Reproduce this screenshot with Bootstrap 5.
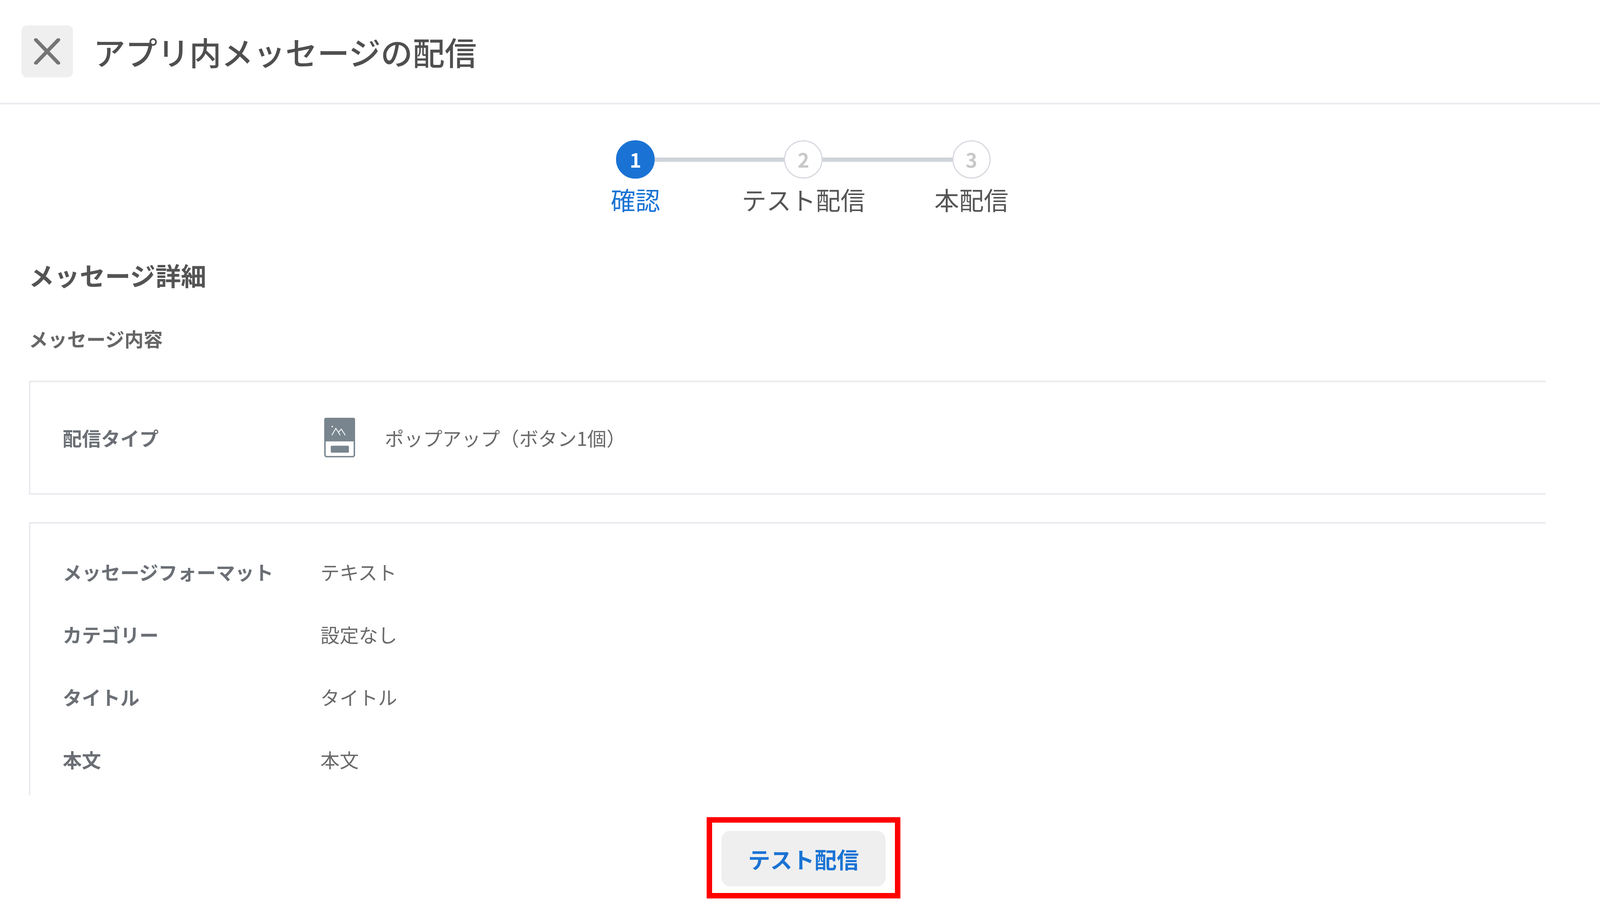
<!DOCTYPE html>
<html lang="ja">
<head>
<meta charset="utf-8">
<title>アプリ内メッセージの配信</title>
<link href="https://cdn.jsdelivr.net/npm/bootstrap@5.3.0/dist/css/bootstrap.min.css" rel="stylesheet">
<style>
html, body { background: #fff; }
body { font-family: "Noto Sans CJK JP", "Noto Sans", sans-serif; color: #5f6368; overflow: hidden; }
.top-bar { height: 267px; padding-left: 1.34vw; border-bottom: 4px solid #e9ebef; }
.close-btn { width: 3.227vw; height: 3.227vw; padding: 0; border: 0; border-radius: 14px; background: #efefef; flex: none; }
.close-btn:hover { background: #efefef; }
.close-btn svg { width: 1.64vw; height: 1.64vw; display: block; margin: auto; }
.page-title { font-size: 2vw; line-height: 1; font-weight: 500; color: #4f4f4f; margin: 0 0 0 1.27vw; }
.centered-block { padding-left: 0.43vw; }
.stepper { margin-top: 87px; height: 108px; }
.step-dot { width: 2.41vw; height: 2.41vw; flex: none; font-size: 1.23vw; font-weight: 700; line-height: 1; background: #fff; border: 3px solid #d6d9df; color: #c8c8c8; }
.step-dot.is-current { background: #1a73d4; border-color: #1a73d4; color: #fff; }
.step-line { width: 8.09vw; height: 11px; background: #cfd3da; flex: none; }
.step-labels { margin-top: 12px; }
.step-label { width: 10.5vw; text-align: center; font-size: 1.545vw; line-height: 72px; color: #555; white-space: nowrap; }
.step-label.is-current { color: #1a73d4; }
.details { padding-left: 1.8vw; padding-right: 3.39vw; }
.section-title { font-size: 1.59vw; line-height: 90px; font-weight: 700; color: #545454; margin: 112px 0 0; }
.sub-title { font-size: 1.2vw; line-height: 70px; font-weight: 700; color: #666; margin: 83px 0 0; }
.info-panel { border: 4px solid #e9ebef; border-right: 0; }
.panel-type { margin-top: 73px; height: 292px; padding-left: 2.02vw; }
.panel-rows { margin-top: 70px; height: 699px; padding: 43px 0 0 2.02vw; border-bottom: 0; overflow: hidden; }
.info-row { height: 160px; }
.info-key { width: 16.11vw; flex: none; font-size: 1.2vw; font-weight: 700; color: #6b6f75; line-height: 1; white-space: nowrap; }
.info-val { font-size: 1.2vw; color: #6a6a6a; line-height: 1; white-space: nowrap; }
.type-icon { width: 1.93vw; height: auto; flex: none; margin-left: 0.23vw; margin-right: 1.86vw; }
.foot-area { margin-top: 56px; }
.mark-frame { border: 14px solid #f00; padding: 21px 0.59vw 17px; }
.send-btn { width: 10.25vw; height: 142px; padding: 0; border: 0; border-radius: 22px; background: #efefef; color: #1a73d4; font-size: 1.386vw; font-weight: 700; line-height: 1; }
.send-btn:hover { background: #efefef; color: #1a73d4; }
</style>
</head>
<body>
<header class="top-bar d-flex align-items-center">
  <button class="btn close-btn d-flex align-items-center justify-content-center" type="button" aria-label="閉じる">
    <svg viewBox="0 0 72 72"><path d="M5 4 67 68M67 4 5 68" stroke="#757575" stroke-width="10" stroke-linecap="round" fill="none"/></svg>
  </button>
  <h1 class="page-title">アプリ内メッセージの配信</h1>
</header>

<main>
  <div class="centered-block">
    <div class="stepper d-flex align-items-center justify-content-center">
      <div class="step-dot is-current rounded-circle d-flex align-items-center justify-content-center">1</div>
      <div class="step-line"></div>
      <div class="step-dot rounded-circle d-flex align-items-center justify-content-center">2</div>
      <div class="step-line"></div>
      <div class="step-dot rounded-circle d-flex align-items-center justify-content-center">3</div>
    </div>
    <div class="step-labels d-flex justify-content-center">
      <div class="step-label is-current">確認</div>
      <div class="step-label">テスト配信</div>
      <div class="step-label">本配信</div>
    </div>
  </div>

  <section class="details">
    <h2 class="section-title">メッセージ詳細</h2>
    <h3 class="sub-title">メッセージ内容</h3>
    <div class="info-panel panel-type d-flex align-items-center">
      <div class="info-key">配信タイプ</div>
      <svg class="type-icon" viewBox="0 0 85 109">
        <rect x="2" y="2" width="81" height="105" rx="5" fill="#fff" stroke="#78858e" stroke-width="4"/>
        <path d="M5 0H80a5 5 0 0 1 5 5V65H0V5a5 5 0 0 1 5-5Z" fill="#78858e"/>
        <path d="M21 48 32 29 44 48M39 40 47 31 58 48" fill="none" stroke="#fff" stroke-width="2.2"/>
        <circle cx="22" cy="24" r="2" fill="#fff"/>
        <rect x="18" y="77" width="50" height="19" rx="3" fill="#78858e"/>
      </svg>
      <div class="info-val">ポップアップ（ボタン1個）</div>
    </div>
    <div class="info-panel panel-rows">
      <div class="info-row d-flex align-items-center"><div class="info-key">メッセージフォーマット</div><div class="info-val">テキスト</div></div>
      <div class="info-row d-flex align-items-center"><div class="info-key">カテゴリー</div><div class="info-val">設定なし</div></div>
      <div class="info-row d-flex align-items-center"><div class="info-key">タイトル</div><div class="info-val">タイトル</div></div>
      <div class="info-row d-flex align-items-center"><div class="info-key">本文</div><div class="info-val">本文</div></div>
    </div>
  </section>

  <div class="centered-block foot-area d-flex justify-content-center">
    <div class="mark-frame">
      <button class="btn send-btn" type="button">テスト配信</button>
    </div>
  </div>
</main>
<script src="https://cdn.jsdelivr.net/npm/bootstrap@5.3.0/dist/js/bootstrap.bundle.min.js"></script>
</body>
</html>
